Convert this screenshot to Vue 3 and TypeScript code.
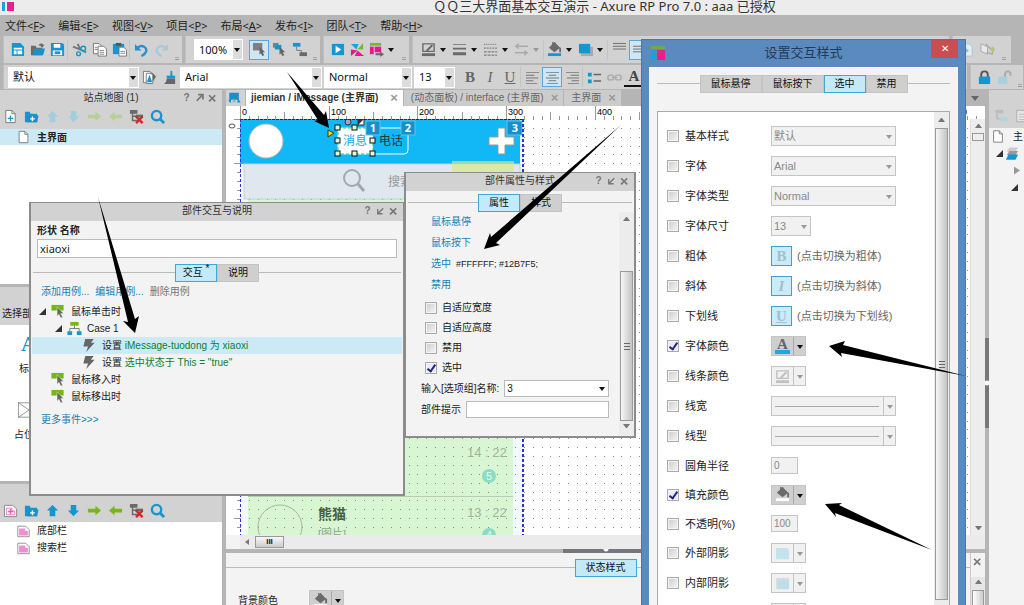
<script setup lang="ts">
import { ref } from 'vue'

const BLUE = '#1596d1'
const GREY = '#6a6a6a'
const doc = (c: string) => `<path d="M3 1.5h6.5l3.5 3.5v9.5h-10z" fill="#fff" stroke="${c}"/><path d="M9.5 1.5v3.500h3.5" fill="none" stroke="${c}"/>`
const cursor = '<path d="M8 5l6 6h-2.500l1.500 3-2 1-1.500-3-1.500 1.500z" fill="#666"/>'
const tree = '<path d="M1 1h8v4h-8zM3 5v8h6v-1.500h-4.500v-3h4.500v-1.500h-4.500v-2z" fill="#6a6a6a"/><path d="M7 6h8v3h-8z" fill="#6a6a6a"/><path d="M7.500 8l7 7M14.500 8l-7 7" stroke="#d3242c" stroke-width="2.500"/>'
const arrowV = (c: string, up: boolean) => `<path d="${up ? 'M8 2l6 6h-3v6h-6v-6h-3z' : 'M8 14l6-6h-3v-6h-6v6h-3z'}" fill="${c}"/>`
const arrowH = (c: string, right: boolean) => `<path d="${right ? 'M15 8l-6-5v3h-8v4h8v3z' : 'M1 8l6-5v3h8v4h-8v3z'}" fill="${c}"/>`
const folder = `<path d="M1 3h5l1 2h7v9h-13z" fill="${BLUE}"/><path d="M3 14l1-7h11.500l-1.500 7z" fill="#1c8fc6"/>`
const pin = '<path d="M1.500 1.500h9l4 4v9h-13z" fill="#e4e4e4" stroke="#aaa"/><path d="M4 6h6M4 9h7M4 12h7" stroke="#bbb"/>'
const bucket = (c: string, base: string) => `<path d="M8 0l6 6-6 5-6-5z" fill="${c}"/><path d="M6 3V0h3" fill="none" stroke="${c}"/><path d="M14 6v5" stroke="${c}" stroke-width="2"/><path d="M1 12h14v3h-14z" fill="${base}"/>`
const pen = (c: string) => `<path d="M2 2h12v8h-12z" fill="none" stroke="${c}" stroke-width="1.500"/><path d="M5 9l6-6 2 1-6 6z" fill="${c}"/><path d="M1 12h14v3h-14z" fill="${c}"/>`
const bar = (ys: number[], c = GREY) => ys.map(y => `<path d="M1 ${y}h14v1h-14z" fill="${c}"/>`).join('')
const master = '<path d="M1.500 2.500h9l4 4v8h-13z" fill="#fff" stroke="#888"/><path d="M3 5h7v3h3v5h-10z" fill="#f08cd0"/>'

const icons: Record<string, string> = {
  newPage: `<path d="M2 1h9l4 4v10h-13z" fill="${BLUE}"/><path d="M4 6h9v2h-9zM4 9h3v4h-3zM8 9h5v4h-5z" fill="#fff"/>`,
  open: '<path d="M1 4h5l1 2h6v8h-12z" fill="#6a6a6a"/><path d="M9 4c1-3 4-3 5-1h1.500l-2.500 3-3-3h2" fill="#6a6a6a"/><path d="M3 14l1-7h12l-2 7z" fill="#1c8fc6"/>',
  save: `<path d="M1 1h12l2 2v12h-14z" fill="${BLUE}"/><path d="M4 2h7v4h-7zM3 9h10v5h-10z" fill="#fff"/><path d="M5 10h6v3h-6z" fill="${BLUE}"/>`,
  cut: `<path d="M1 5l8 3 6 3M6 2l3 6" stroke="#777" stroke-width="2" fill="none"/><circle cx="7" cy="12.500" r="2" fill="none" stroke="${BLUE}" stroke-width="1.500"/><circle cx="12" cy="7" r="2.500" fill="none" stroke="${BLUE}" stroke-width="1.500"/>`,
  copy: '<path d="M1.500 1.500h6l3 3v8h-9z" fill="#f4f4f4" stroke="#777"/><path d="M6.500 4.500h6l3 3v7.500h-9z" fill="#fff" stroke="#777"/><path d="M8 9h5M8 11h5M8 13h5M3 6h3M3 8h3" stroke="#888"/>',
  paste: `<path d="M1 2h12v11h-12z" fill="${BLUE}"/><path d="M4 1h6v3h-6z" fill="#555"/><path d="M7.500 5.500h5l3 3v6.500h-8z" fill="#fff" stroke="#777"/><path d="M9 10h5M9 12h5" stroke="#888"/>`,
  undo: '<path d="M4 6c5-4 10 0 9 4-1 3-3 4-5 5" fill="none" stroke="#2a8fcb" stroke-width="2.500"/><path d="M1 2v7h7z" fill="#2a8fcb"/>',
  redo: '<path d="M12 6c-5-4-10 0-9 4 1 3 3 4 5 5" fill="none" stroke="#a9c9d8" stroke-width="2.500"/><path d="M15 2v7h-7z" fill="#a9c9d8"/>',
  select: `<path d="M1 1h10v8h-10z" fill="#808080"/>${cursor}`,
  contain: `<path d="M1 1h6v5h-6z" fill="#808080"/><path d="M3 3h7v5h-7z" fill="${BLUE}"/>${cursor}`,
  connect: `<path d="M1 1h8v4h-8z" fill="${BLUE}"/><path d="M5 5v4h5v4" fill="none" stroke="#777"/><path d="M8 11h8v4h-8z" fill="#6a6a6a"/>`,
  play: `<path d="M2 2h13v12h-13z" fill="${BLUE}"/><path d="M6 4l6 4-6 4z" fill="#fff"/>`,
  share: '<path d="M1 2h8l-2 6z" fill="#13a6dd"/><path d="M14 1v7h-6z" fill="#7ab828"/><path d="M1 8l7 1-7 6zM8 9l7 6h-10z" fill="#e9178c"/>',
  publish: '<path d="M1 1h12v3h-12z" fill="#7ab828"/><path d="M1 5h4v8h-4z" fill="#e9178c"/><path d="M6 5h7v6h-7z" fill="#e9178c"/><path d="M7 12h5v-2l4 3-4 3v-2h-5z" fill="#666"/>',
  pen: pen(GREY), penOff: pen('#c0c0c0'),
  width: '<path d="M1 2h14v1h-14zM1 6h14v2h-14zM1 11h14v3h-14z" fill="#6a6a6a"/>',
  dash: '<path d="M1 2.500h14" stroke="#666" stroke-dasharray="1 1"/><path d="M1 6.500h14" stroke="#666" stroke-dasharray="2 1"/><path d="M1 10.500h14M1 14h14" stroke="#666" stroke-dasharray="3 1"/>',
  ends: '<path d="M3 4.500h12M1 11.500h12M5 2l-3 2.500 3 2.500M11 9l3 2.500-3 2.500" stroke="#aaa" fill="none" stroke-width="1.500"/>',
  fill: bucket(GREY, BLUE), fillWhite: bucket(GREY, '#fff'),
  shadow: '<path d="M3 5h13v10h-13z" fill="#aaa"/><path d="M1 2h12v10h-12z" fill="#1596d1"/>',
  shadowOff: '<path d="M1 2h12l2 3v9h-14z" fill="#c3e2ee"/>',
  innerOff: '<path d="M1 2h14v12h-14z" fill="#d4dde2"/><path d="M3 4h12v10h-12z" fill="#bfdcea"/>',
  vtop: bar([1, 4, 7]), vmid: bar([4, 7, 10]),
  left: '<path d="M1 2h14v1h-14zM1 5h9v1h-9zM1 8h13v1h-13zM1 11h8v1h-8zM1 14h12v1h-12z" fill="#777"/>',
  center: '<path d="M1 2h14v1h-14zM4 5h8v1h-8zM1 8h14v1h-14zM4 11h8v1h-8zM2 14h12v1h-12z" fill="#777"/>',
  right: '<path d="M1 2h14v1h-14zM6 5h9v1h-9zM2 8h13v1h-13zM7 11h8v1h-8zM3 14h12v1h-12z" fill="#777"/>',
  bullets: `<path d="M1 3h4v4h-4zM1 10h4v4h-4z" fill="${BLUE}"/><path d="M7 4h8v1.500h-8zM7 11h8v1.500h-8z" fill="#666"/>`,
  link: '<rect x="1" y="5.500" width="6" height="5" rx="2" fill="none" stroke="#aaa" stroke-width="1.500"/><rect x="9" y="5.500" width="6" height="5" rx="2" fill="none" stroke="#aaa" stroke-width="1.500"/><path d="M5 8h6" stroke="#aaa"/>',
  styleEdit: '<path d="M1.500 1.500h7l2 2v10h-9z" fill="#fff" stroke="#777"/><path d="M8 3l3 0 4 4-5 8h-3z" fill="#666"/><path d="M4.500 3.500h5l2 2v9h-7z" fill="#fff" stroke="#777"/><path d="M5 13l3-8 3 8z" fill="#1596d1"/>',
  brush: '<path d="M9 1h2v6h-2z" fill="#1596d1"/><path d="M5 6h9v3h-9z" fill="#1596d1"/><path d="M5 9h9v6h-12q3-2 3-6z" fill="#666"/>',
  lock: '<path d="M4.500 8v-3q0-3.500 3.500-3.500t3.500 3.500v3" fill="none" stroke="#555" stroke-width="2"/><path d="M2 7h12v8h-12z" fill="#1596d1"/>',
  unlock: '<path d="M8.500 8v-3q0-3.500 3-3.500t3 3.500v1" fill="none" stroke="#aaa" stroke-width="2"/><path d="M1 7h10v8h-10z" fill="#a9cfe0"/>',
  ghost1: '<path d="M3 2h8l3 3v10h-11z" fill="#e6eef0" stroke="#aac4cc"/><path d="M4 9h6M7 6v6" stroke="#7fb8cc" stroke-width="2"/>',
  ghost2: '<path d="M1 2l7 3v8l-7-3z" fill="#e8e8e8" stroke="#aaa"/><path d="M6 2l6 6M14 6l-1 7-6-2" fill="none" stroke="#aaa" stroke-width="1.500"/><path d="M11 8h5M13.500 5v6" stroke="#b5c47a" stroke-width="2"/>',
  addPage: `${doc('#777')}<path d="M8 7v6M5 10h6" stroke="${BLUE}" stroke-width="1.500"/>`,
  addFolder: `${folder}<path d="M9 8v5M6.500 10.500h5" stroke="#fff" stroke-width="1.500"/>`,
  page: doc('#777'), pageWide: pin,
  upOff: arrowV('#a3cde0', true), downOff: arrowV('#a3cde0', false),
  rightOff: arrowH('#b9cf98', true), leftOff: arrowH('#b9cf98', false),
  up: arrowV(BLUE, true), down: arrowV(BLUE, false),
  rightOn: arrowH('#79b51c', true), leftOn: arrowH('#79b51c', false),
  tree,
  search: `<circle cx="7" cy="7" r="5" fill="none" stroke="${BLUE}" stroke-width="2.500"/><path d="M10.500 10.500l4.500 4.500" stroke="${BLUE}" stroke-width="3"/>`,
  master, addMaster: '<path d="M1.500 2.500h9l4 4v8h-13z" fill="#fff" stroke="#888"/><path d="M3.500 5.500h6v3h3v4h-9z" fill="#fff" stroke="#ee7ac8"/><path d="M8 6v6M5 9h6" stroke="#ee5ab8" stroke-width="1.500"/>',
  event: '<path d="M1 1h13v6h-13z" fill="#74b816"/><path d="M7 3l7 7h-3l2 4-2 1-2-4-2 2z" fill="#666" stroke="#f3f3f3" stroke-width="0.500"/>',
  caseIcon: '<path d="M4 1h9v4h-9z" fill="#74b816"/><path d="M8.500 5v3M3.500 11v-3h10v3" fill="none" stroke="#777"/><path d="M1 11h5v4h-5zM11 11h5v4h-5z" fill="#1596d1"/>',
  bolt: '<path d="M4 1h9l-3 4h4l-9 10 2-6h-5z" fill="#666"/>',
  widgets: '<path d="M2 2h11v8h-11z" fill="#1c8fc6"/><path d="M1 11l3-4v7zM12 8l3 5h-4z" fill="#1596d1"/><path d="M6 10h3v3h-3z" fill="#aaa"/>',
  layers: '<path d="M5 1h10l-3 5h-10z" fill="#ccc"/><path d="M5 5h10l-3 5h-10z" fill="#999"/><path d="M4 9h11l-3 6h-11z" fill="#1596d1"/>',
  popOut: '<path d="M6 3h7v7M13 3l-9 9" fill="none" stroke="#777" stroke-width="2.500"/>',
  popIn: '<path d="M4 5v7h7M4 12l8-8" fill="none" stroke="#777" stroke-width="2"/>',
  close: '<path d="M3 4l9 9M12 4l-9 9" stroke="#777" stroke-width="2.500"/>',
  arrange: '<path d="M1 1h9v4h-9z" fill="#bcbcbc"/><path d="M3 5v6h3" fill="none" stroke="#bcbcbc" stroke-width="2"/><path d="M6 9h9v5h-9z" fill="#b5d3dd"/>',
  logo: '<path d="M1 1h14v3h-14z" fill="#72a84a"/><path d="M1 5h5v10h-5z" fill="#1aa0dc"/><path d="M7 5h8v10h-8z" fill="#ec1e8c"/>',
}

const menus = [['文件', 'F'], ['编辑', 'E'], ['视图', 'V'], ['项目', 'P'], ['布局', 'A'], ['发布', 'I'], ['团队', 'T'], ['帮助', 'H']]

interface Tool { icon: string; name: string; caret?: boolean; sep?: boolean; on?: boolean; off?: boolean }
const fileTools: Tool[] = [
  { icon: 'newPage', name: '新建' }, { icon: 'open', name: '打开' }, { icon: 'save', name: '保存', sep: true },
  { icon: 'cut', name: '剪切' }, { icon: 'copy', name: '复制' }, { icon: 'paste', name: '粘贴', sep: true },
  { icon: 'undo', name: '撤销' }, { icon: 'redo', name: '重做' },
]
const selectTools: Tool[] = [{ icon: 'select', name: '相交选择', on: true }, { icon: 'contain', name: '包含选择' }, { icon: 'connect', name: '连接线' }]
const publishTools: Tool[] = [{ icon: 'play', name: '预览' }, { icon: 'share', name: '共享' }, { icon: 'publish', name: '发布', caret: true }]
const drawTools: Tool[] = [
  { icon: 'pen', name: '线条颜色', caret: true }, { icon: 'width', name: '线宽', caret: true },
  { icon: 'dash', name: '线型', caret: true }, { icon: 'ends', name: '箭头', caret: true, off: true, sep: true },
  { icon: 'fill', name: '填充颜色', caret: true }, { icon: 'shadow', name: '阴影', caret: true, sep: true },
  { icon: 'vtop', name: '顶部对齐' }, { icon: 'vmid', name: '垂直居中', on: true },
]
const alignTools: Tool[] = [
  { icon: 'left', name: '左对齐' }, { icon: 'center', name: '居中', on: true }, { icon: 'right', name: '右对齐', sep: true },
  { icon: 'bullets', name: '项目符号' }, { icon: 'link', name: '链接' },
]
const siteTools = ['addPage', 'addFolder', 'upOff', 'downOff', 'rightOff', 'leftOff', 'tree', 'search']
const masterTools = ['addMaster', 'addFolder', 'up', 'down', 'rightOn', 'leftOn', 'tree', 'search']

const UNIT = 887
const at = (i: number) => Math.round((i * UNIT) / 100)
const hTicks = Array.from({ length: 85 }, (_, i) => ({ x: 14 + at(i), h: i % 10 === 0 ? 13 : i % 5 === 0 ? 7 : 3, label: i % 10 === 0 ? String(i * 10) : '' }))
const vTicks = Array.from({ length: 50 }, (_, i) => ({ y: at(i), w: i % 5 === 0 ? 6 : 3 }))
let dots = ''
for (let r = 0; r < 60; r++) for (let c = 0; c < 130; c++) dots += `M${at(c)} ${at(r)}h1v1h-1z`
const handles = [98, 115, 133].flatMap(x => [9, 22, 35].map(y => ({ x: x - 3, y: y - 3 }))).filter(h => !(h.x === 112 && h.y === 19))

const widgetName = ref('xiaoxi')
const tip = ref('')
const flags = ref([
  { label: '自适应宽度', on: false }, { label: '自适应高度', on: false },
  { label: '禁用', on: false }, { label: '选中', on: true },
])

interface StyleRow { label: string; kind: string; value?: string; icon?: string; on?: boolean; tight?: boolean; note?: string }
const rows = ref<StyleRow[]>([
  { label: '基本样式', kind: 'select', value: '默认' },
  { label: '字体', kind: 'select', value: 'Arial' },
  { label: '字体类型', kind: 'select', value: 'Normal' },
  { label: '字体尺寸', kind: 'small', value: '13' },
  { label: '粗体', kind: 'toggle', value: 'B', note: '(点击切换为粗体)' },
  { label: '斜体', kind: 'toggle', value: 'I', note: '(点击切换为斜体)' },
  { label: '下划线', kind: 'toggle', value: 'U', note: '(点击切换为下划线)' },
  { label: '字体颜色', kind: 'letter', on: true },
  { label: '线条颜色', kind: 'picker', icon: 'penOff' },
  { label: '线宽', kind: 'line' },
  { label: '线型', kind: 'line' },
  { label: '圆角半径', kind: 'text', value: '0', tight: true },
  { label: '填充颜色', kind: 'picker', icon: 'fillWhite', on: true, tight: true },
  { label: '不透明(%)', kind: 'text', value: '100', tight: true },
  { label: '外部阴影', kind: 'picker', icon: 'shadowOff' },
  { label: '内部阴影', kind: 'picker', icon: 'innerOff' },
  { label: '文字阴影', kind: 'picker', icon: 'shadowOff' },
])

const arrow = (x1: number, y1: number, x2: number, y2: number) => {
  const len = Math.hypot(x2 - x1, y2 - y1)
  const ux = (x2 - x1) / len, uy = (y2 - y1) / len
  const p = (back: number, side: number) => `${Math.round(x2 - ux * back - uy * side)},${Math.round(y2 - uy * back + ux * side)}`
  return [`${x1},${y1}`, p(13, 4), p(15, 8), `${x2},${y2}`, p(15, -8), p(13, -4)].join(' ')
}
const arrows = [arrow(287, 72, 329, 128), arrow(98, 197, 135, 333), arrow(621, 125, 484, 249), arrow(966, 376, 829, 346), arrow(932, 550, 825, 504)]
</script>

<template>
  <div class="app">
    <header class="title">
      <span class="mark"><i></i><i></i></span>
      <span class="caption">ＱＱ三大界面基本交互演示 - Axure RP Pro 7.0 : aaa 已授权</span>
    </header>
    <nav class="menu">
      <button v-for="m in menus" :key="m[0]">{{ m[0] }}&lt;<u>{{ m[1] }}</u>&gt;</button>
    </nav>

    <div class="bar">
      <div class="group">
        <template v-for="t in fileTools" :key="t.name">
          <button class="tool" :aria-label="t.name"><svg viewBox="0 0 16 16" v-html="icons[t.icon]" /></button>
          <i v-if="t.sep" class="sep"></i>
        </template>
        <i class="more"></i>
      </div>
      <div class="group view">
        <span class="combo zoom"><select aria-label="缩放"><option>100%</option></select></span>
        <button v-for="t in selectTools" :key="t.name" class="tool" :class="{ on: t.on }" :aria-label="t.name"><svg viewBox="0 0 16 16" v-html="icons[t.icon]" /></button>
        <i class="more"></i>
      </div>
      <div class="group">
        <button v-for="t in publishTools" :key="t.name" class="tool" :class="{ drop: t.caret }" :aria-label="t.name"><svg viewBox="0 0 16 16" v-html="icons[t.icon]" /></button>
        <i class="more"></i>
      </div>
      <div class="group grow view">
        <template v-for="t in drawTools" :key="t.name">
          <button class="tool" :class="{ drop: t.caret, on: t.on, off: t.off }" :aria-label="t.name"><svg viewBox="0 0 16 16" v-html="icons[t.icon]" /></button>
          <i v-if="t.sep" class="sep"></i>
        </template>
      </div>
      <div class="group tail">
        <button class="tool" aria-label="组合"><svg viewBox="0 0 16 16" v-html="icons.ghost1" /></button>
        <button class="tool" aria-label="取消组合"><svg viewBox="0 0 16 16" v-html="icons.ghost2" /></button>
        <i class="more"></i>
      </div>
    </div>

    <div class="bar second">
      <div class="group grow">
        <span class="combo style"><select aria-label="样式"><option>默认</option></select></span>
        <button class="tool" aria-label="编辑样式"><svg viewBox="0 0 16 16" v-html="icons.styleEdit" /></button>
        <button class="tool" aria-label="格式刷"><svg viewBox="0 0 16 16" v-html="icons.brush" /></button>
        <span class="combo font"><select aria-label="字体"><option>Arial</option></select></span>
        <span class="combo weight"><select aria-label="字体类型"><option>Normal</option></select></span>
        <span class="combo size"><select aria-label="字号"><option>13</option></select></span>
        <button class="tool glyph"><b>B</b></button>
        <button class="tool glyph"><em>I</em></button>
        <button class="tool glyph"><u>U</u></button>
        <i class="sep"></i>
        <template v-for="t in alignTools" :key="t.name">
          <button class="tool" :class="{ on: t.on }" :aria-label="t.name"><svg viewBox="0 0 16 16" v-html="icons[t.icon]" /></button>
          <i v-if="t.sep" class="sep"></i>
        </template>
        <button class="tool glyph ink"><b>A</b></button>
      </div>
      <div class="group locks">
        <button class="tool" aria-label="锁定"><svg viewBox="0 0 16 16" v-html="icons.lock" /></button>
        <button class="tool" aria-label="解锁"><svg viewBox="0 0 16 16" v-html="icons.unlock" /></button>
        <i class="more"></i>
      </div>
    </div>

    <main class="work">
      <aside class="left">
        <section class="panel site">
          <div class="head"><h2>站点地图 (1)</h2>
            <span class="ctl"><b>?</b><svg viewBox="0 0 16 16" v-html="icons.popOut" /><svg viewBox="0 0 16 16" v-html="icons.close" /></span>
          </div>
          <div class="tools"><button v-for="t in siteTools" :key="t" class="tool" :aria-label="t"><svg viewBox="0 0 16 16" v-html="icons[t]" /></button></div>
          <div class="row current"><svg viewBox="0 0 16 16" v-html="icons.page" /><b>主界面</b></div>
        </section>
        <section class="panel library">
          <div class="libhead">选择部件库</div>
          <div class="widget"><strong>A</strong><span>标签</span></div>
          <div class="widget"><svg class="ph" viewBox="0 0 26 18"><path d="M.5.5h25v17h-25zM0 0l26 18M26 0l-26 18" fill="none" stroke="#888" /></svg><span>占位符</span></div>
        </section>
        <section class="panel masters">
          <div class="tools low"><button v-for="t in masterTools" :key="t" class="tool" :aria-label="t"><svg viewBox="0 0 16 16" v-html="icons[t]" /></button></div>
          <div class="row"><svg viewBox="0 0 16 16" v-html="icons.master" />底部栏</div>
          <div class="row"><svg viewBox="0 0 16 16" v-html="icons.master" />搜索栏</div>
        </section>
      </aside>

      <section class="center">
        <div class="tabs">
          <button class="tabicon" aria-label="页面"><svg viewBox="0 0 16 16" v-html="icons.widgets" /></button>
          <button class="tab active">jiemian / iMessage (主界面)<i>×</i></button>
          <button class="tab">(动态面板) / interface (主界面)<i>×</i></button>
          <button class="tab">主界面<i>×</i></button>
          <span class="tabmenu"></span>
        </div>
        <svg class="hruler">
          <g v-for="t in hTicks" :key="t.x">
            <rect :x="t.x" :y="13 - t.h" width="1" :height="t.h" fill="#999" />
            <text :x="t.x + 2" y="9">{{ t.label }}</text>
          </g>
        </svg>
        <div class="stage">
          <svg class="vruler">
            <rect v-for="t in vTicks" :key="t.y" :x="14 - t.w" :y="t.y" :width="t.w" height="1" fill="#999" />
            <ellipse cx="6" cy="7" rx="3" ry="2" fill="none" stroke="#555" />
          </svg>
          <svg class="canvas">
            <rect x="0" width="283" height="100%" fill="#f3faff" />
            <rect x="8" y="44" width="265" height="100%" fill="#d9f6d2" />
            <path :d="dots" fill="#8388a8" />
            <rect x="0" width="280" height="45" fill="#12b7f5" />
            <rect x="4" y="45" width="276" height="35" fill="#dfe7ef" stroke="#c6d0d8" />
            <rect x="212" y="42" width="62" height="12" fill="#d6e888" opacity=".65" />
            <circle cx="112" cy="59" r="8" fill="none" stroke="#a3a8ac" stroke-width="2" />
            <path d="M118 65l6 7" stroke="#a3a8ac" stroke-width="3" />
            <text x="148" y="67" font-size="12" fill="#999">搜索</text>
            <circle cx="26" cy="22" r="17" fill="#fff" stroke="#b8b8b8" />
            <rect x="98" y="9" width="70" height="26" rx="4" fill="none" stroke="#fff" />
            <rect x="98" y="9" width="35" height="26" fill="#fff" stroke="#20d060" stroke-dasharray="3 2" />
            <text x="103" y="26" font-size="12" fill="#12a5e0">消息</text>
            <text x="139" y="26" font-size="12" fill="#333">电话</text>
            <path d="M258 9h7v9h9v8h-9v9h-7v-9h-9v-8h9z" fill="#fff" stroke="#999" />
            <rect v-for="h in handles" :key="`${h.x}-${h.y}`" :x="h.x" :y="h.y" width="5" height="5" fill="#d8fbe4" stroke="#111" />
            <path d="M88 11l6 3-6 4z" fill="#f2e400" stroke="#333" />
            <circle cx="108" cy="3" r="3" fill="#a9a2c8" stroke="#333" />
            <path d="M118 0h6v6h-6z" fill="#fff" stroke="#333" /><path d="M118 0h6l-6 6z" fill="#333" />
            <g class="badges">
              <rect x="126" y="2" width="14" height="14" /><text x="133" y="13">1</text>
              <rect x="161" y="2" width="14" height="14" /><text x="168" y="13">2</text>
              <rect x="267" y="2" width="15" height="14" /><text x="275" y="13">3</text>
            </g>
            <g font-size="13" fill="#9fb59b">
              <text x="227" y="338">14 : 22</text><text x="227" y="398">13 : 22</text>
            </g>
            <circle cx="249" cy="357" r="7" fill="#8bdcc4" /><text x="249" y="361" class="num">5</text>
            <circle cx="249" cy="416" r="7" fill="#8bdcc4" /><text x="249" y="420" class="num">4</text>
            <rect x="8" y="377" width="265" height="1" fill="#b9cdb5" />
            <circle cx="40" cy="408" r="22" fill="none" stroke="#a5b5a1" />
            <text x="78" y="400" font-size="14" font-weight="bold" fill="#486040">熊猫</text>
            <text x="78" y="419" font-size="11" fill="#8fa58b">[图片]</text>
            <path d="M0 0h283" stroke="#1414c8" stroke-width="2" stroke-dasharray="3 1" />
            <path d="M0 0v900M283 0v900" stroke="#3030d8" stroke-width="2" stroke-dasharray="3 2" />
          </svg>
          <div class="vscroll"><i class="up"></i><i class="box"></i><i class="down"></i></div>
        </div>
        <div class="hscroll"><i class="back"></i><i class="thumb">III</i></div>
        <div class="split"><i></i></div>
        <div class="bottom">
          <div class="rule"><button class="seg on">状态样式</button></div>
          <div class="bg"><span>背景颜色</span><button class="picker live" aria-label="背景颜色"><svg viewBox="0 0 16 16" v-html="icons.fillWhite" /></button></div>
          <div class="side"><svg viewBox="0 0 16 16" v-html="icons.close" /><i class="up"></i><i class="grab"></i></div>
        </div>
      </section>

      <div class="gutter"><i></i></div>
      <aside class="right">
        <div class="rhead"><svg viewBox="0 0 16 16" v-html="icons.arrange" /><svg viewBox="0 0 16 16" v-html="icons.pageWide" /></div>
        <div class="rrow"><svg viewBox="0 0 16 16" v-html="icons.page" /><span>主界面</span></div>
        <div class="rrow"><i class="open"></i><svg viewBox="0 0 16 16" v-html="icons.layers" /></div>
        <div class="rrow deep"><i class="shut"></i></div>
        <div class="rrow deep"><i class="open"></i></div>
      </aside>
    </main>

    <section class="win events">
      <div class="head"><h2>部件交互与说明</h2><span class="ctl"><b>?</b><svg viewBox="0 0 16 16" v-html="icons.popIn" /><svg viewBox="0 0 16 16" v-html="icons.close" /></span></div>
      <label class="name" for="widget-name">形状 名称</label>
      <input id="widget-name" v-model="widgetName" class="namebox">
      <div class="rule"><button class="seg on">交互 <sup>*</sup></button><button class="seg">说明</button></div>
      <div class="links"><a href="#">添加用例...</a><a href="#">编辑用例...</a><span>删除用例</span></div>
      <ul class="cases">
        <li><i class="open"></i><svg viewBox="0 0 16 16" v-html="icons.event" />鼠标单击时</li>
        <li class="l2"><i class="open"></i><svg viewBox="0 0 16 16" v-html="icons.caseIcon" />Case 1</li>
        <li class="l3 hit"><svg viewBox="0 0 16 16" v-html="icons.bolt" /><span>设置 <em>iMessage-tuodong 为 xiaoxi</em></span></li>
        <li class="l3"><svg viewBox="0 0 16 16" v-html="icons.bolt" /><span>设置 <em>选中状态于 This = "true"</em></span></li>
        <li class="l1"><svg viewBox="0 0 16 16" v-html="icons.event" />鼠标移入时</li>
        <li class="l1"><svg viewBox="0 0 16 16" v-html="icons.event" />鼠标移出时</li>
      </ul>
      <a class="moreevents" href="#">更多事件&gt;&gt;&gt;</a>
    </section>

    <section class="win props">
      <div class="head"><h2>部件属性与样式</h2><span class="ctl"><b>?</b><svg viewBox="0 0 16 16" v-html="icons.popIn" /><svg viewBox="0 0 16 16" v-html="icons.close" /></span></div>
      <div class="rule"><button class="seg on">属性</button><button class="seg">样式</button></div>
      <div class="pbody">
        <div class="form">
          <p><a href="#">鼠标悬停</a></p>
          <p><a href="#">鼠标按下</a></p>
          <p><a href="#">选中</a><span class="hex">#FFFFFF; #12B7F5;</span></p>
          <p><a href="#">禁用</a></p>
          <label v-for="f in flags" :key="f.label" class="flag"><input v-model="f.on" type="checkbox">{{ f.label }}</label>
          <div class="field"><label for="grp">输入[选项组]名称:</label><span class="combo plain"><select id="grp"><option>3</option></select></span></div>
          <div class="field"><label for="tip">部件提示</label><input id="tip" v-model="tip"></div>
        </div>
        <div class="track"><i class="up"></i><i class="bigthumb"></i><i class="down"></i></div>
      </div>
    </section>

    <section class="dialog">
      <div class="dhead"><svg viewBox="0 0 16 16" v-html="icons.logo" /><h2>设置交互样式</h2><button aria-label="关闭">✕</button></div>
      <div class="dbody">
        <div class="rule"><button class="seg">鼠标悬停</button><button class="seg">鼠标按下</button><button class="seg on">选中</button><button class="seg">禁用</button></div>
        <div class="list">
          <div class="rows">
            <div v-for="(r, i) in rows" :key="r.label" class="srow" :class="{ tight: r.tight }">
              <input :id="`style-${i}`" v-model="r.on" type="checkbox">
              <label :for="`style-${i}`">{{ r.label }}</label>
              <span v-if="r.kind === 'select' || r.kind === 'small'" class="combo dis" :class="r.kind"><select disabled :aria-label="r.label"><option>{{ r.value }}</option></select></span>
              <template v-else-if="r.kind === 'toggle'">
                <button class="toggle" :class="r.value">{{ r.value }}</button><span class="note">{{ r.note }}</span>
              </template>
              <button v-else-if="r.kind === 'letter'" class="picker live letter" :aria-label="r.label"><b>A</b></button>
              <button v-else-if="r.kind === 'picker'" class="picker" :class="{ live: r.on }" :aria-label="r.label"><svg viewBox="0 0 16 16" v-html="icons[r.icon!]" /></button>
              <button v-else-if="r.kind === 'line'" class="picker line" :aria-label="r.label"><i></i></button>
              <input v-else type="text" class="num" :value="r.value" disabled :aria-label="r.label">
            </div>
          </div>
          <div class="track"><i class="up"></i><i class="bigthumb"></i></div>
        </div>
      </div>
    </section>

    <svg class="arrows" aria-hidden="true"><polygon v-for="a in arrows" :key="a" :points="a" /></svg>
  </div>
</template>

<style>
body { margin: 0; overflow: hidden; }
</style>

<style scoped>
.app { position: relative; display: flex; flex-direction: column; height: 100vh; overflow: hidden; background: #b5b5b5; color: #222; font: 10px/16px "Liberation Sans", "Noto Sans CJK SC", sans-serif; }
.app * { box-sizing: border-box; }
button { margin: 0; padding: 0; border: 0; background: none; color: inherit; font: inherit; }
input, select { margin: 0; font: inherit; color: inherit; outline: 0; }
h2, p, ul { margin: 0; padding: 0; font-size: inherit; font-weight: normal; list-style: none; }
a { color: #1b7fb5; text-decoration: none; }
svg { display: block; flex: none; }
i { font-style: normal; }

.title { position: relative; flex: none; height: 15px; background: #ececec; }
.mark { position: absolute; left: 2px; top: 2px; display: flex; gap: 2px; }
.mark i { width: 3px; height: 9px; background: #1aa0dc; }
.mark i + i { width: 7px; background: #ec1e8c; }
.caption { display: block; padding-left: 185px; text-align: center; font: 13px/12px "Noto Sans", "Noto Sans CJK SC", sans-serif; color: #333; white-space: nowrap; }
.menu { flex: none; display: flex; gap: 13px; height: 21px; padding-left: 5px; font: 11px/21px "Noto Sans", "Noto Sans CJK SC", sans-serif; }

.bar { flex: none; display: flex; gap: 3px; height: 29px; padding: 0 13px 2px 3px; }
.bar.second { height: 24px; padding: 0 1px 0 3px; }
.group { display: flex; align-items: center; padding-left: 3px; background: #d2d2d2; border-left: 1px solid #c0c0c0; }
.group.view { padding-left: 6px; }
.group .more { width: 11px; height: 20px; background: linear-gradient(#aaa, #aaa) 4px 17px / 4px 1px no-repeat, linear-gradient(#999, #999) 4px 19px / 4px 1px no-repeat; }
.grow { flex: 1; min-width: 0; overflow: hidden; }
.sep { flex: none; width: 2px; height: 20px; border-left: 1px solid #c4c4c4; }
.tool { flex: none; display: flex; align-items: center; justify-content: center; width: 20px; height: 20px; }
.tool svg { width: 15px; height: 15px; }
.tool.on { background: #cfe6f6; border: 1px solid #5aa6dc; }
.drop { position: relative; width: 31px; justify-content: flex-start; padding-left: 2px; }
.drop::after { content: ""; margin-left: 4px; border: 3px solid transparent; border-top: 4px solid #111; border-bottom: 0; }
.drop.off::after { border-top-color: #999; }
.combo { position: relative; flex: none; display: flex; height: 21px; background: #fff; font: 11px/20px "Noto Sans", "Noto Sans CJK SC", sans-serif; }
.combo select { flex: 1; width: 100%; appearance: none; border: 0; background: none; padding: 0 0 0 5px; color: #111; opacity: 1; }
.combo::after { content: ""; position: absolute; right: 1px; top: 1px; bottom: 1px; width: 9px; background: #dcdcdc; pointer-events: none; }
.combo::before { content: ""; position: absolute; z-index: 1; right: 3px; top: 9px; border: 3px solid transparent; border-top: 4px solid #111; border-bottom: 0; pointer-events: none; }
.zoom { width: 49px; margin: 0 6px 0 2px; }
.style { width: 131px; margin-left: 1px; }
.font { width: 142px; margin: 0 2px 0 1px; }
.weight { width: 88px; margin-right: 2px; }
.size { width: 41px; margin-right: 5px; }
.glyph { font: 15px/20px "Liberation Serif", serif; color: #666; }
.ink { color: #444; border-bottom: 2px solid #111; }
.tail { width: 59px; }
.tail .tool { width: 21px; }
.locks { width: 53px; }

.work { flex: 1; display: grid; grid-template-columns: 222px minmax(0, 1fr) 4px 35px; min-height: 0; padding-top: 1px; }
.work > .left { display: grid; grid-template-rows: 194px 194px minmax(0, 1fr); gap: 3px; }
.panel { background: #fff; overflow: hidden; }
.head { position: relative; height: 16px; background: #d2d2d2; text-align: center; color: #333; }
.head h2 { line-height: 16px; }
.ctl { position: absolute; right: 4px; top: 2px; display: flex; gap: 2px; line-height: 12px; color: #777; }
.ctl svg, .ctl b { width: 11px; height: 12px; }
.tools { display: flex; gap: 1px; height: 23px; padding: 0; background: #d2d2d2; }
.tools.low { height: 38px; padding-top: 16px; }
.row { display: flex; align-items: center; gap: 6px; height: 17px; padding-left: 16px; line-height: 17px; }
.row svg { width: 15px; height: 14px; }
.current { height: 16px; background: #cce9f6; }
.libhead { height: 38px; padding: 19px 0 0 2px; background: #d2d2d2; line-height: 16px; white-space: nowrap; }
.widget { display: flex; flex-direction: column; align-items: center; width: 58px; height: 66px; padding-top: 9px; }
.widget strong { font: bold 22px/20px "Liberation Serif", serif; color: #1596d1; }
.widget span { margin-top: 7px; }
.widget .ph { width: 22px; height: 20px; }

.center { display: flex; flex-direction: column; margin-left: 4px; min-width: 0; background: #f3f3f3; }
.tabs { flex: none; display: flex; gap: 1px; height: 16px; background: #b5b5b5; }
.tabicon { width: 19px; background: #d2d2d2; }
.tabicon svg { width: 17px; height: 14px; }
.tab { display: flex; align-items: center; gap: 7px; padding: 0 5px 0 7px; background: #ccc; color: #666; white-space: nowrap; }
.tab.active { gap: 12px; padding-left: 5px; background: #fff; color: #333; font-weight: bold; }
.tab i { font: bold 13px/14px "Liberation Sans", sans-serif; color: #999; }
.tabmenu { margin: 6px 6px 0 auto; width: 8px; height: 5px; border: 4px solid transparent; border-top: 5px solid #666; border-bottom: 0; }
.hruler { flex: none; width: 100%; height: 13px; background: #fff; font-size: 9px; }
.stage { flex: 1; display: flex; min-height: 0; background: #fff; }
.vruler { width: 14px; height: 100%; background: #fff; }
.canvas { flex: 1; width: 0; height: 100%; background: #fff; }
.badges rect { fill: #168fca; stroke: #5fc4ee; }
.badges text { fill: #fff; font: bold 11px "Noto Sans", sans-serif; text-anchor: middle; }
.canvas .num { fill: #e4fbef; font-size: 11px; text-anchor: middle; }
.vscroll { display: flex; flex-direction: column; align-items: center; width: 15px; background: #ededed; border-left: 1px solid #ddd; }
.up, .down { width: 7px; height: 4px; margin: 5px auto; border: 3px solid transparent; border-bottom: 4px solid #777; border-top: 0; flex: none; }
.down { border-top: 4px solid #777; border-bottom: 0; margin-top: auto; }
.box { width: 12px; height: 8px; border: 1px solid #999; background: #eee; }
.hscroll { flex: none; display: flex; align-items: center; height: 14px; margin: 0 0 0 14px; background: #ebebeb; }
.back { margin: 0 6px 0 5px; border: 3px solid transparent; border-right: 4px solid #777; border-left: 0; }
.thumb { width: 29px; height: 12px; border: 1px solid #999; background: linear-gradient(#f8f8f8, #ccc); text-align: center; font: bold 8px/10px "Liberation Sans", sans-serif; }
.split { flex: none; display: flex; justify-content: center; height: 4px; background: #b5b5b5; }
.split i { width: 86px; background: radial-gradient(circle at 50% 0, #fff 2px, #777 3px); }
.bottom { position: relative; flex: none; height: 52px; overflow: hidden; }
.rule { display: flex; justify-content: center; height: 18px; background: linear-gradient(#bbb, #bbb) 0 8px / 100% 1px no-repeat; }
.bottom .rule { margin-top: 6px; }
.bottom .rule .seg { width: 62px; }
.seg { height: 18px; border: 1px solid #c4c4c4; background: #cfcfcf; font: inherit; color: #111; }
.seg.on { border-color: #42a6d2; background: #c4e9f9; }
.bg { display: flex; gap: 31px; padding: 13px 0 0 12px; line-height: 22px; }
.side { position: absolute; right: 0; top: 0; width: 15px; height: 100%; background: linear-gradient(#f3f3f3 24px, #e6e6e6 24px); border-left: 1px solid #ccc; }
.side svg { width: 11px; height: 11px; margin: 3px 1px 0; }
.side .up { margin: 13px auto 6px; display: block; }
.side .grab { display: block; height: 20px; margin: 0 1px; border: 1px solid #999; background: linear-gradient(90deg, #fff, #ccc); }
.gutter i { display: block; height: 90px; margin-top: 248px; background: radial-gradient(circle at 50% 50%, #fff 2px, #777 3px); }
.right { background: #f3f3f3; overflow: hidden; }
.rhead { display: flex; gap: 6px; height: 38px; padding: 19px 0 0 5px; background: #d2d2d2; }
.rhead svg { width: 15px; height: 14px; }
.rrow { display: flex; align-items: center; gap: 2px; height: 17px; padding-left: 2px; white-space: nowrap; }
.rrow svg { width: 14px; height: 15px; }
.rrow span { margin-left: 6px; }
.rrow .open { margin-left: 5px; }
.deep { padding-left: 17px; }
.open { flex: none; width: 7px; height: 7px; background: #333; clip-path: polygon(100% 0, 100% 100%, 0 100%); }
.shut { width: 6px; height: 8px; margin-left: 8px; background: #999; clip-path: polygon(0 0, 100% 50%, 0 100%); }

.win { position: absolute; border: 2px solid #8c8c8c; border-top-width: 1px; background: #f3f3f3; }
.win .head { height: 18px; }
.events { left: 29px; top: 202px; width: 376px; height: 294px; }
.name { display: block; margin: 3px 6px 2px; font-size: 10px; line-height: 14px; font-weight: bold; }
.namebox { display: block; width: calc(100% - 12px); height: 19px; margin: -1px 6px 6px; padding: 0 2px; border: 1px solid #bbb; background: #fff; font: 11px/17px "Noto Sans", sans-serif; }
.events .rule, .props .rule { margin: 0 2px; }
.events .seg, .props .seg { width: 42px; }
sup { font-size: 10px; line-height: 0; }
.links { display: flex; gap: 6px; padding: 2px 10px 0; color: #777; }
.cases { padding-top: 3px; }
.cases li { display: flex; align-items: center; gap: 4px; height: 17px; margin: 0 1px; padding-left: 7px; }
.cases svg { width: 16px; height: 15px; margin-right: 1px; }
.cases .l2 { padding-left: 23px; }
.cases .l3 { padding-left: 49px; }
.cases .l1 { padding-left: 18px; }
.hit { background: #cce9f6; }
.cases em { font-style: normal; color: #0c8030; }
.moreevents { display: block; margin: 7px 10px; }

.props { left: 404px; top: 172px; width: 232px; height: 266px; display: flex; flex-direction: column; }
.props .head { margin-bottom: 3px; }
.pbody { flex: 1; display: flex; min-height: 0; }
.form { flex: 1; padding: 0 10px 0 15px; }
.form p { height: 21px; padding-left: 10px; line-height: 19px; }
.hex { margin-left: 5px; font-size: 9px; }
.flag { display: flex; align-items: center; gap: 5px; height: 20px; margin-left: 4px; }
.form p:nth-child(4) { margin-bottom: 2px; }
input[type="checkbox"] { flex: none; appearance: none; width: 12px; height: 12px; border: 1px solid #aaa; background: linear-gradient(135deg, #ccc, #f6f6f6); box-shadow: inset 0 0 0 1px #f4f4f4; }
input[type="checkbox"]:checked { background: #e9e9fa; }
input[type="checkbox"]:checked::after { content: ""; display: block; width: 3px; height: 7px; margin: 0 0 0 3px; border: solid #26267a; border-width: 0 2px 2px 0; transform: rotate(35deg); }
.field { display: flex; align-items: center; gap: 5px; height: 21px; white-space: nowrap; }
.field input, .field .combo { flex: 1; min-width: 0; height: 17px; border: 1px solid #bbb; background: #fff; font: 10px/15px "Liberation Sans", sans-serif; }
.plain::after { display: none; }
.plain::before { top: 6px; }
.field .combo select { padding-left: 2px; }
.track { display: flex; flex-direction: column; width: 15px; background: #ececec; }
.bigthumb { margin: 0 1px; border: 1px solid #9a9a9a; background: linear-gradient(#666, #666) 50% calc(50% - 3px) / 6px 1px no-repeat, linear-gradient(#666, #666) 50% 50% / 6px 1px no-repeat, linear-gradient(#666, #666) 50% calc(50% + 3px) / 6px 1px no-repeat, linear-gradient(90deg, #f6f6f6, #c4c4c4); }
.props .bigthumb { height: 150px; margin-top: 45px; }
.props .down { margin-bottom: 8px; }

.dialog { position: absolute; left: 641px; top: 39px; bottom: 0; width: 325px; display: flex; flex-direction: column; padding: 0 7px; background: #5b8abf; border: 1px solid #4777ab; border-width: 1px 1px 0; overflow: hidden; font-size: 11px; }
.dhead { position: relative; flex: none; height: 27px; text-align: center; }
.dhead h2 { font-size: 13px; line-height: 26px; color: #253a55; }
.dhead svg { position: absolute; left: 1px; top: 5px; width: 16px; height: 16px; }
.dhead button { position: absolute; right: 0; top: 0; width: 27px; height: 18px; background: #c84f50; color: #fff; font-size: 10px; }
.dbody { flex: 1; display: flex; flex-direction: column; min-height: 0; padding: 8px 8px 0; background: #f3f3f3; }
.dbody .rule { flex: none; margin-bottom: 18px; }
.dbody .seg { font-size: 10px; padding: 0 10px; }
.list { flex: 1; display: flex; min-height: 0; border: 1px solid #aaa; border-bottom: 0; background: #fff; overflow: hidden; }
.rows { flex: 1; padding: 9px 0 0 9px; }
.srow { display: flex; align-items: center; height: 30px; }
.srow.tight { height: 29px; }
.srow label { width: 86px; margin-left: 6px; }
.dis { width: 125px; height: 20px; border: 1px solid #c4c4c4; background: #f1f1f1; font: 11px/18px "Liberation Sans", "Noto Sans CJK SC", sans-serif; }
.dis.small { width: 40px; }
.dis select { padding-left: 2px; color: #888; }
.dis::after { display: none; }
.dis::before { border-top-color: #999; top: 8px; }
.toggle { width: 21px; height: 20px; margin-right: 5px; border: 1px solid #42a0cf; background: #c9ebfa; font: bold 15px/18px "Liberation Serif", serif; color: #a3bfcc; }
.toggle.I { font-style: italic; }
.toggle.U { text-decoration: underline; }
.note { color: #666; }
.picker { position: relative; display: flex; align-items: center; width: 35px; height: 20px; padding-left: 3px; border: 1px solid #c4c4c4; background: linear-gradient(#c4c4c4, #c4c4c4) right 11px top / 1px 100% no-repeat #f1f1f1; }
.picker.live { background-color: #cfcfcf; background-image: linear-gradient(#aaa, #aaa); }
.picker svg { width: 15px; height: 15px; }
.picker::after { content: ""; position: absolute; right: 2px; top: 8px; border: 3px solid transparent; border-top: 4px solid #999; border-bottom: 0; }
.picker.live::after { border-top-color: #111; }
.letter b { width: 15px; height: 16px; border-bottom: 4px solid #1da8e0; font: bold 15px/12px "Liberation Serif", serif; color: #666; text-align: center; }
.line { width: 125px; }
.line i { width: 104px; height: 1px; background: #aaa; }
.srow .num { width: 27px; height: 17px; padding: 0 2px; border: 1px solid #c4c4c4; background: #f1f1f1; color: #888; font: 10px/15px "Liberation Sans", sans-serif; }
.dialog .track .up { margin: 6px auto; }
.dialog .bigthumb { flex: none; height: calc(100% - 21px); }
.arrows { position: absolute; inset: 0; width: 100%; height: 100%; pointer-events: none; }
</style>
